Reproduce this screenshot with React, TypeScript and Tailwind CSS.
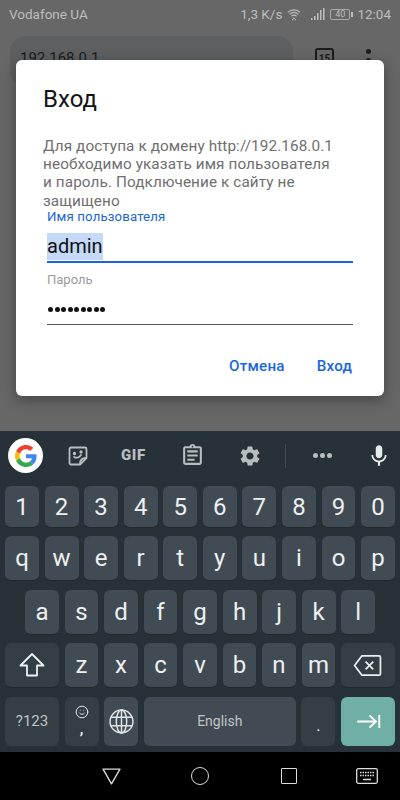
import React from 'react';
import { Smile } from 'lucide-react';
import { MdMic, MdSettings, MdOutlineAssignment } from 'react-icons/md';

const ROW_1 = ['1', '2', '3', '4', '5', '6', '7', '8', '9', '0'];
const ROW_2 = ['q', 'w', 'e', 'r', 't', 'y', 'u', 'i', 'o', 'p'];
const ROW_3 = ['a', 's', 'd', 'f', 'g', 'h', 'j', 'k', 'l'];
const ROW_4 = ['z', 'x', 'c', 'v', 'b', 'n', 'm'];

function Key({ label }: { label: string }) {
  return (
    <div className="flex-1 flex items-center justify-center rounded-[6px] bg-[#414b53] border-b border-[#1e282d] text-[#eef0f1] text-[24px]">
      {label}
    </div>
  );
}

function GoogleLogo() {
  return (
    <svg viewBox="0 0 48 48" className="w-[22px] h-[22px]">
      <path fill="#EA4335" d="M24 9.500c3.500 0 6.700 1.200 9.200 3.600l6.900-6.900C35.900 2.400 30.500 0 24 0 14.600 0 6.500 5.400 2.600 13.200l8 6.200C12.500 13.700 17.800 9.500 24 9.500z" />
      <path fill="#4285F4" d="M47 24.500c0-1.600-.1-3.100-.4-4.500H24v9h13c-.6 3-2.300 5.500-4.800 7.200l7.700 6C44.400 38.500 47 32 47 24.500z" />
      <path fill="#FBBC05" d="M10.600 28.600c-.5-1.400-.8-3-.8-4.600s.3-3.200.8-4.600l-8-6.200C.9 16.500 0 20.100 0 24s.9 7.500 2.600 10.800l8-6.200z" />
      <path fill="#34A853" d="M24 48c6.500 0 11.900-2.100 15.900-5.800l-7.700-6c-2.100 1.400-4.900 2.300-8.200 2.300-6.200 0-11.500-4.200-13.400-9.900l-8 6.200C6.500 42.600 14.600 48 24 48z" />
    </svg>
  );
}

function StatusIcons() {
  return (
    <>
      <svg viewBox="0 0 16 14" className="w-[14px] h-[13px] ml-[5px]" fill="none" stroke="#bdbdbd" strokeWidth="1.300">
        <path d="M1 4.500C5 .8 11 .8 15 4.500M3 6.800c3-2.600 7-2.600 10 0M5 9c1.800-1.500 4.200-1.500 6 0" />
        <path d="M7 11.500h2M6 13h1M9 13h1" strokeWidth="1.500" />
      </svg>
      <svg viewBox="0 0 14 14" className="w-[14px] h-[14px] ml-[10px]" fill="#bdbdbd">
        <rect x="0" y="11" width="1.500" height="2" />
        <rect x="3" y="9" width="1.500" height="4" />
        <rect x="6" y="6" width="1.500" height="7" />
        <rect x="9" y="3" width="1.500" height="10" />
        <rect x="12" y="1" width="1.500" height="12" />
      </svg>
      <div className="ml-[5px] flex items-center">
        <div className="w-[20px] h-[11px] rounded-[2px] border border-[#a8a8a8] px-[1px] flex items-center justify-center text-[#bdbdbd] text-[9px] leading-none">
          40
        </div>
        <div className="w-[2px] h-[5px] bg-[#bdbdbd] ml-[1px]" />
      </div>
    </>
  );
}

export default function App() {
  return (
    <div className="relative w-[400px] h-[800px] overflow-hidden flex flex-col bg-black font-['Roboto',sans-serif]">
      {/* затемнённая страница браузера */}
      <div className="h-[431px] shrink-0 bg-[#676767]">
        <div className="h-[28px] flex items-center pl-[9px] pr-[9px] text-[13.500px] text-[#bdbdbd]">
          <span>Vodafone UA</span>
          <span className="ml-auto">1,3 K/s</span>
          <StatusIcons />
          <span className="ml-[4px]">12:04</span>
        </div>
        <div className="flex items-start mt-[8px] pl-[10px]">
          <div className="w-[283px] h-[50px] rounded-[16px] bg-[#5e5f61] pl-[10px] pt-[11px] text-[15px] text-[#1c1c1c]">192.168.0.1</div>
          <div className="ml-[22px] mt-[12px] w-[19px] h-[20px] rounded-[3px] border-2 border-[#1c1c1c] text-[10px] font-bold text-[#1c1c1c] flex items-center justify-center">15</div>
          <div className="ml-[32px] mt-[13px] flex flex-col gap-[4px]">
            <div className="w-[5px] h-[5px] rounded-full bg-[#1c1c1c]" />
            <div className="w-[5px] h-[5px] rounded-full bg-[#1c1c1c]" />
          </div>
        </div>
      </div>

      {/* диалог входа */}
      <div className="absolute left-[16px] top-[60px] w-[368px] h-[336px] rounded-[6px] bg-white shadow-[0_4px_14px_rgba(0,0,0,0.35)] pt-[23px] pl-[27px] pr-[31px]">
        <h1 className="text-[24px] leading-[32px] text-[#141414]">Вход</h1>
        <p className="mt-[22px] text-[15.300px] leading-[18.200px] text-[#6f6f6f] tracking-[0.1px] whitespace-nowrap">
          Для доступа к домену http://192.168.0.1
          <br />
          необходимо указать имя пользователя
          <br />
          и пароль. Подключение к сайту не
          <br />
          защищено
        </p>
        <div className="-mt-[2px] pl-[4px] text-[13.200px] leading-[18px] text-[#1a66d9] tracking-[0.15px]">Имя пользователя</div>
        <div className="mt-[5px] ml-[4px] h-[32px] border-b-2 border-[#1a66e0] flex items-start">
          <span className="mt-[2px] bg-[#c5d9f8] text-[20px] leading-[27px] text-[#111]">admin</span>
        </div>
        <div className="mt-[8px] pl-[4px] text-[13px] leading-[18px] text-[#9b9b9b]">Пароль</div>
        <div className="mt-[4px] ml-[4px] h-[32px] border-b border-[#555] flex items-start">
          <div className="flex gap-[1.500px] mt-[14px] pl-[1px]">
            {Array.from({ length: 9 }).map((_, i) => (
              <div key={i} className="w-[5px] h-[5px] rounded-full bg-[#111]" />
            ))}
          </div>
        </div>
        <div className="mt-[30px] mr-[1px] flex justify-end gap-[32px] text-[15.200px] font-medium text-[#1a66e0] tracking-[0.2px]">
          <span>Отмена</span>
          <span>Вход</span>
        </div>
      </div>

      {/* клавиатура */}
      <div className="h-[321px] shrink-0 bg-[#263238] flex flex-col">
        <div className="h-[55px] shrink-0 flex items-center pb-[6px] pl-[8px] pr-[8px] text-[#b9bdc0]">
          <div className="w-[35px] h-[35px] rounded-full bg-white flex items-center justify-center">
            <GoogleLogo />
          </div>
          <svg viewBox="0 0 20 20" className="ml-[25px] w-[20px] h-[20px]" fill="none" stroke="#b9bdc0" strokeWidth="1.800" strokeLinejoin="round">
            <path d="M3 1.500h14c.8 0 1.500.7 1.500 1.500v9l-6.500 6.500H3c-.8 0-1.500-.7-1.500-1.500V3c0-.8.7-1.500 1.500-1.500z" />
            <path d="M18 12c-3 0-6 1.500-6 6" />
            <path d="M6 11c2.500 1.500 5.500.5 7-2" strokeLinecap="round" />
            <circle cx="6.500" cy="7.500" r=".8" fill="#b9bdc0" />
            <circle cx="13" cy="6" r=".8" fill="#b9bdc0" />
          </svg>
          <span className="ml-[33px] w-[26px] text-[15px] leading-none font-black tracking-[0.6px]">GIF</span>
          <MdOutlineAssignment className="ml-[33px] w-[25px] h-[25px]" />
          <MdSettings className="ml-[33px] w-[24px] h-[24px]" />
          <div className="ml-[23px] w-px h-[24px] bg-[#3f4a52]" />
          <div className="ml-[27px] flex gap-[2px]">
            <div className="w-[5px] h-[5px] rounded-full bg-[#b9bdc0]" />
            <div className="w-[5px] h-[5px] rounded-full bg-[#b9bdc0]" />
            <div className="w-[5px] h-[5px] rounded-full bg-[#b9bdc0]" />
          </div>
          <MdMic className="ml-auto w-[26px] h-[26px] text-[#e8eaeb]" />
        </div>

        <div className="px-[5px] flex flex-col">
          <div className="h-[42px] flex gap-[5.600px]">
            {ROW_1.map((k) => <Key key={k} label={k} />)}
          </div>
          <div className="h-[45px] mt-[8px] flex gap-[5.600px]">
            {ROW_2.map((k) => <Key key={k} label={k} />)}
          </div>
          <div className="h-[45px] mt-[9px] px-[20px] flex gap-[5.600px]">
            {ROW_3.map((k) => <Key key={k} label={k} />)}
          </div>
          <div className="h-[45px] mt-[8px] flex gap-[5.600px]">
            <div className="w-[54px] shrink-0 flex items-center justify-center rounded-[6px] bg-[#333e45] border-b border-[#1e282d]">
              <svg viewBox="0 0 26 26" className="w-[26px] h-[26px]" fill="none" stroke="#eef0f1" strokeWidth="1.800" strokeLinejoin="round">
                <path d="M13 2 1.500 13.500H8V23.500H18V13.500H24.500Z" />
              </svg>
            </div>
            {ROW_4.map((k) => <Key key={k} label={k} />)}
            <div className="w-[54px] shrink-0 flex items-center justify-center rounded-[6px] bg-[#333e45] border-b border-[#1e282d]">
              <svg viewBox="0 0 30 24" className="w-[29px] h-[23px]" fill="none" stroke="#eef0f1" strokeWidth="1.800" strokeLinejoin="round">
                <path d="M9 2H27c.8 0 1.500.7 1.500 1.500v17c0 .8-.7 1.500-1.500 1.500H9L1.500 12Z" />
                <path d="M13 8l8 8M21 8l-8 8" />
              </svg>
            </div>
          </div>
          <div className="h-[49px] mt-[9px] flex gap-[5.600px]">
            <div className="w-[54px] shrink-0 flex items-center justify-center rounded-[6px] bg-[#333e45] text-[#c0c4c6] text-[15px]">?123</div>
            <div className="w-[34px] shrink-0 flex flex-col items-center rounded-[6px] bg-[#333e45] text-[#eef0f1]">
              <Smile className="mt-[8px] w-[14px] h-[14px]" strokeWidth={1.600} />
              <span className="text-[16px] leading-[18px] font-medium mt-[1px]">,</span>
            </div>
            <div className="w-[34px] shrink-0 flex items-center justify-center rounded-[6px] bg-[#414b53]">
              <svg viewBox="0 0 24 24" className="w-[25px] h-[25px]" fill="none" stroke="#e2e4e6" strokeWidth="1.400">
                <circle cx="12" cy="12" r="11" />
                <ellipse cx="12" cy="12" rx="5" ry="11" />
                <path d="M12 1v22M2 8h20M2 16h20" />
              </svg>
            </div>
            <div className="flex-1 flex items-center justify-center rounded-[6px] bg-[#414b53] text-[#c0c4c6] text-[14px]">English</div>
            <div className="w-[34px] shrink-0 flex items-center justify-center rounded-[6px] bg-[#333e45] text-[#eef0f1] text-[16px] pt-[8px]">.</div>
            <div className="w-[54px] shrink-0 flex items-center justify-center rounded-[6px] bg-[#6fafa6]">
              <svg viewBox="0 0 26 16" className="w-[25px] h-[15px]" fill="none" stroke="#fff" strokeWidth="2">
                <path d="M1 8h20M14 1.500 21 8l-7 6.500" />
                <path d="M24.500 1v14" />
              </svg>
            </div>
          </div>
        </div>
      </div>

      {/* навигация */}
      <div className="flex-1 bg-black flex items-center pl-[102px]">
        <svg viewBox="0 0 18 16" className="w-[19px] h-[17px]" fill="none" stroke="#dcdcdc" strokeWidth="1.300" strokeLinejoin="round">
          <path d="M1 1h16L9 15Z" />
        </svg>
        <div className="ml-[70px] w-[18px] h-[18px] rounded-full border-[1.500px] border-[#dcdcdc]" />
        <div className="ml-[72px] w-[16px] h-[16px] rounded-[1px] border-[1.500px] border-[#dcdcdc]" />
        <svg viewBox="0 0 22 16" className="ml-[59px] w-[22px] h-[16px]" fill="none" stroke="#dcdcdc" strokeWidth="1.300">
          <rect x=".7" y=".7" width="20.600" height="14.600" rx="1.500" />
          <path d="M4 4.500h14M4 7.500h14" strokeWidth="1.500" strokeDasharray="1.500 1" />
          <path d="M7 11.500h8" strokeWidth="1.500" />
        </svg>
      </div>
    </div>
  );
}
